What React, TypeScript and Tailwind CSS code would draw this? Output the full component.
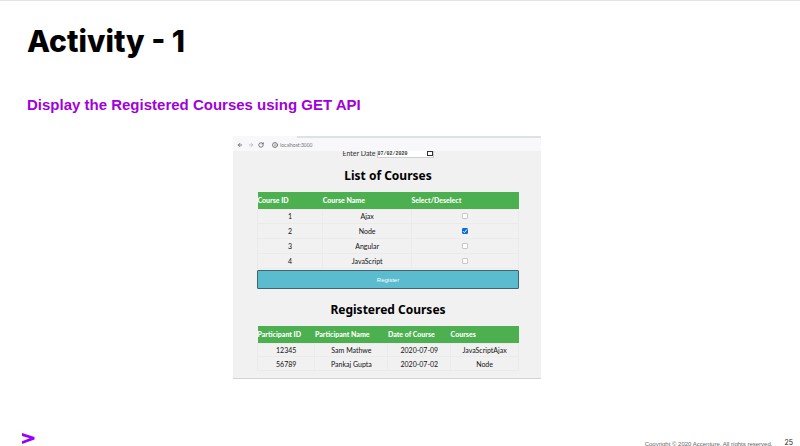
import React, { useState } from "react";
import { ArrowLeft, ArrowRight, Info, RotateCw } from "lucide-react";

const courses = [
  { id: 1, name: "Ajax" },
  { id: 2, name: "Node" },
  { id: 3, name: "Angular" },
  { id: 4, name: "JavaScript" },
];

const registrations = [
  { id: "12345", name: "Sam Mathwe", date: "2020-07-09", courses: "JavaScriptAjax" },
  { id: "56789", name: "Pankaj Gupta", date: "2020-07-02", courses: "Node" },
];

const courseColumns = [
  { label: "Course ID", width: "w-[25%]" },
  { label: "Course Name", width: "w-[34%]" },
  { label: "Select/Deselect", width: "w-[41%]" },
];

const registrationColumns = [
  { label: "Participant ID", width: "w-[22%]" },
  { label: "Participant Name", width: "w-[28%]" },
  { label: "Date of Course", width: "w-[24%]" },
  { label: "Courses", width: "w-[26%]" },
];

type Column = { label: string; width: string };

function TableHead({ columns }: { columns: Column[] }) {
  return (
    <thead>
      <tr className="h-[17px] bg-[#4caf50] text-left text-white">
        {columns.map((column) => (
          <th key={column.label} scope="col" className={`${column.width} p-0 font-black whitespace-nowrap`}>
            {column.label}
          </th>
        ))}
      </tr>
    </thead>
  );
}

function Cell({ children }: { children: React.ReactNode }) {
  return <td className="border border-[#ebebeb] p-0 text-center">{children}</td>;
}

const tableClass =
  "w-full table-fixed border-collapse font-['Lato',sans-serif] text-[7px] leading-[10px] text-[#111]";

function BrowserBar() {
  return (
    <div className="bg-[#f8f8fb]">
      <div className="h-[2px] bg-[#dee1e6]">
        <div className="h-full w-16 bg-[#f8f8fb]" />
      </div>
      <div className="flex h-[13px] items-center gap-1 px-1 text-[#555]">
        <button type="button" aria-label="Back">
          <ArrowLeft className="size-[6px]" strokeWidth={3} />
        </button>
        <button type="button" aria-label="Forward" className="ml-px text-[#b5b5b5]">
          <ArrowRight className="size-[6px]" strokeWidth={3} />
        </button>
        <button type="button" aria-label="Reload">
          <RotateCw className="size-[6px]" strokeWidth={3} />
        </button>
        <Info className="ml-1 size-[6px]" strokeWidth={3} />
        <span className="-ml-0.5 font-['Lato',sans-serif] text-[5px] leading-[8px] text-[#777]">localhost:3000</span>
      </div>
    </div>
  );
}

function CourseApp() {
  const [selected, setSelected] = useState<number[]>([2]);
  const toggle = (id: number) =>
    setSelected((now) => (now.includes(id) ? now.filter((item) => item !== id) : [...now, id]));

  return (
    <div className="bg-[#f1f1f1] pr-[22px] pb-[7px] pl-6">
      <div className="flex h-[7px] items-end justify-center overflow-hidden">
        <div className="flex items-end gap-px">
          <label htmlFor="date" className="font-['Lato',sans-serif] text-[7px] leading-[9px] text-[#333]">
            Enter Date
          </label>
          <div className="flex h-[11px] w-[57px] items-end border border-[#cfcfcf] bg-white">
            <input
              id="date"
              defaultValue="07/02/2020"
              className="h-[6px] w-[49px] font-['Liberation_Mono',monospace] text-[5px] font-bold leading-[6px] text-[#333]"
            />
            <svg viewBox="0 0 6 6" className="size-[6px] shrink-0 text-[#333]" aria-hidden="true">
              <rect x="0.5" y="0.5" width="5" height="4" fill="none" stroke="currentColor" />
            </svg>
          </div>
        </div>
      </div>

      <h3 className="mt-[9px] text-center font-['Noto_Sans',sans-serif] text-[12px] leading-[18px] font-bold text-black">
        List of Courses
      </h3>
      <table className={`mt-[7px] h-[77px] ${tableClass}`}>
        <TableHead columns={courseColumns} />
        <tbody>
          {courses.map((course) => (
            <tr key={course.id}>
              <Cell>{course.id}</Cell>
              <Cell>{course.name}</Cell>
              <Cell>
                <label className="flex justify-center">
                  <input
                    type="checkbox"
                    aria-label={`Select ${course.name}`}
                    checked={selected.includes(course.id)}
                    onChange={() => toggle(course.id)}
                    className="peer sr-only"
                  />
                  <span className="flex size-[6px] items-center justify-center rounded-[1px] border border-[#c8c8c8] bg-white text-transparent peer-checked:border-[#0b6bd8] peer-checked:bg-[#0b6bd8] peer-checked:text-white">
                    <svg viewBox="0 0 6 6" className="size-[6px] shrink-0" fill="none" aria-hidden="true">
                      <path d="M1 3.2 2.4 4.6 5 1.4" stroke="currentColor" />
                    </svg>
                  </span>
                </label>
              </Cell>
            </tr>
          ))}
        </tbody>
      </table>
      <button
        type="button"
        className="mt-px block h-[19px] w-full rounded-[1px] border border-[#42646d] bg-[#5bbccf] font-['Liberation_Sans',sans-serif] text-[6px] leading-[8px] text-white"
      >
        Register
      </button>

      <h3 className="mt-3 text-center font-['Noto_Sans',sans-serif] text-[12px] leading-[18px] font-bold text-black">
        Registered Courses
      </h3>
      <table className={`mt-[7px] h-[45px] ${tableClass}`}>
        <TableHead columns={registrationColumns} />
        <tbody>
          {registrations.map((row) => (
            <tr key={row.id}>
              <Cell>{row.id}</Cell>
              <Cell>{row.name}</Cell>
              <Cell>{row.date}</Cell>
              <Cell>{row.courses}</Cell>
            </tr>
          ))}
        </tbody>
      </table>
    </div>
  );
}

export default function App() {
  return (
    <div className="flex h-screen flex-col overflow-hidden border-t border-[#e4e4e4] bg-white">
      <header className="px-[27px] pt-5">
        <h1 className="font-['Inter',sans-serif] text-[30px] leading-[40px] font-extrabold text-black">Activity - 1</h1>
        <h2 className="mt-8 font-['Liberation_Sans',sans-serif] text-[15px] leading-[24px] font-bold text-[#a100dc]">
          Display the Registered Courses using GET API
        </h2>
      </header>
      <main className="grow pt-[19px] pl-[233px]">
        <div className="max-w-[308px] border-b border-[#d4d4d4]">
          <BrowserBar />
          <CourseApp />
        </div>
      </main>
      <footer className="flex h-[14px] shrink-0 items-start pr-[7px] pl-[21px]">
        <svg viewBox="0 0 14 12" className="h-3 w-[14px]" role="img" aria-label="Accenture">
          <path d="M1 1 13.5 5V7.5L1 12V9.2L8.7 6.3 1 3.9Z" fill="#9500ff" />
        </svg>
        <p className="mt-2 ml-auto font-['Liberation_Sans',sans-serif] text-[6px] leading-[8px] whitespace-nowrap text-[#666]">
          Copyright © 2020 Accenture. All rights reserved.
        </p>
        <p className="mt-[5px] ml-3 font-['Inter',sans-serif] text-[7px] leading-[12px] text-[#222]">25</p>
      </footer>
    </div>
  );
}
